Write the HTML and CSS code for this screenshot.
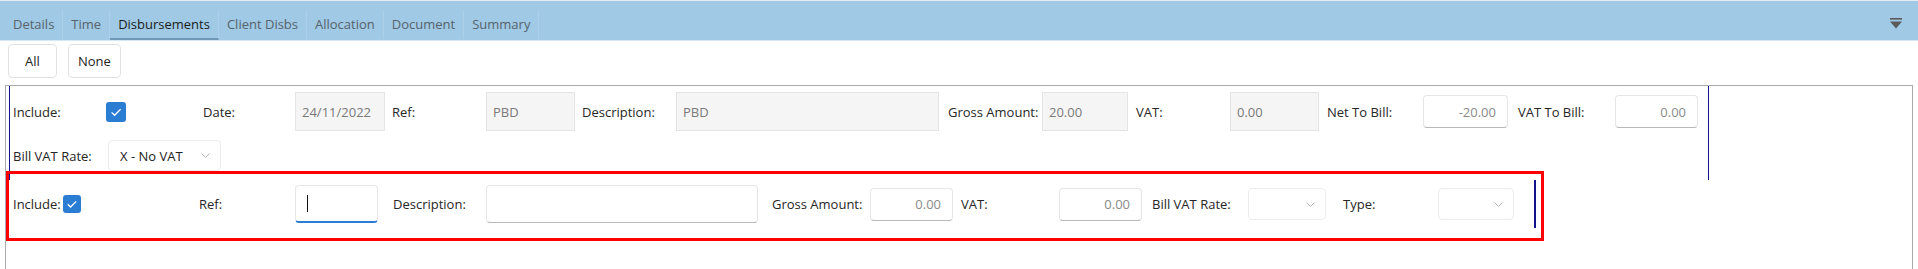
FILE: index.html
```html
<!DOCTYPE html>
<html lang="en">
<head>
    <meta charset="UTF-8">
    <meta name="viewport" content="width=device-width, initial-scale=1.0">
    <title>Disbursements</title>
    <link rel="stylesheet" href="styles.css">
</head>
<body>
    <!-- Tabs -->
    <div class="tabbar">
        <span class="tab">Details</span>
        <span class="tab">Time</span>
        <span class="tab active">Disbursements</span>
        <span class="tab">Client Disbs</span>
        <span class="tab">Allocation</span>
        <span class="tab">Document</span>
        <span class="tab">Summary</span>
        <svg class="menu-toggle" width="12" height="11" viewBox="0 0 12 11">
            <rect x="0" y="0" width="12" height="1.6" fill="#5a5a5a"/>
            <polygon points="0,3.6 12,3.6 6,10.6" fill="#5a5a5a"/>
        </svg>
    </div>

    <div class="actions">
        <button class="btn">All</button>
        <button class="btn">None</button>
    </div>

    <div class="panel">
        <!-- Existing disbursement -->
        <div class="item">
            <div class="row">
                <span class="lbl l-93">Include:</span>
                <span class="cell f-include">
                    <svg class="check" width="20" height="20" viewBox="0 0 20 20">
                        <rect width="20" height="20" rx="3" fill="#2b7cd3"/>
                        <path d="M5.6 10.4 L8.6 13.3 L14.6 7.2" fill="none" stroke="#fff" stroke-width="1.3"/>
                    </svg>
                </span>
                <span class="lbl l-92">Date:</span>
                <input class="inp dis f-date" value="24/11/2022" disabled>
                <span class="lbl">Ref:</span>
                <input class="inp dis f-ref" value="PBD" disabled>
                <span class="lbl">Description:</span>
                <input class="inp dis f-desc" value="PBD" disabled>
                <span class="lbl">Gross Amount:</span>
                <input class="inp dis f-gross" value="20.00" disabled>
                <span class="lbl">VAT:</span>
                <input class="inp dis f-vat" value="0.00" disabled>
                <span class="lbl l-96">Net To Bill:</span>
                <input class="inp f-net" value="-20.00">
                <span class="lbl l-97">VAT To Bill:</span>
                <input class="inp f-vatbill" value="0.00">
            </div>
            <div class="row">
                <span class="lbl l-95">Bill VAT Rate:</span>
                <div class="sel f-rate">
                    <span>X - No VAT</span>
                    <svg width="9" height="5" viewBox="0 0 9 5"><path d="M0.5 0.5 L4.5 4.5 L8.5 0.5" fill="none" stroke="#b5b5b5"/></svg>
                </div>
            </div>
        </div>

        <!-- New disbursement -->
        <div class="newrow">
            <div class="row row-new">
                <span class="cell f-include2">
                    <span>Include:</span>
                    <svg class="check small" width="18" height="18" viewBox="0 0 18 18">
                        <rect width="18" height="18" rx="3" fill="#2b7cd3"/>
                        <path d="M4.8 9.3 L7.6 12 L13.2 6.4" fill="none" stroke="#fff" stroke-width="1.3"/>
                    </svg>
                </span>
                <span class="lbl l-96">Ref:</span>
                <div class="inp txt focus f-ref2"><span class="caret"></span></div>
                <span class="lbl l-93">Description:</span>
                <input class="inp txt f-desc2" value="">
                <span class="lbl l-98">Gross Amount:</span>
                <input class="inp f-gross2" value="0.00">
                <span class="lbl l-98">VAT:</span>
                <input class="inp f-vat2" value="0.00">
                <span class="lbl l-96">Bill VAT Rate:</span>
                <div class="sel f-rate2">
                    <span></span>
                    <svg width="9" height="5" viewBox="0 0 9 5"><path d="M0.5 0.5 L4.5 4.5 L8.5 0.5" fill="none" stroke="#b5b5b5"/></svg>
                </div>
                <span class="lbl l-95">Type:</span>
                <div class="sel f-type">
                    <span></span>
                    <svg width="9" height="5" viewBox="0 0 9 5"><path d="M0.5 0.5 L4.5 4.5 L8.5 0.5" fill="none" stroke="#b5b5b5"/></svg>
                </div>
            </div>
        </div>

        <!-- highlight around the new row -->
        <div class="highlight"></div>
    </div>
</body>
</html>
```

FILE: styles.css
```css
body {
    margin: 0;
    font-family: "Open Sans", "Noto Sans", Arial, sans-serif;
    font-size: 13px;
    color: #262626;
    background-color: #fff;
    overflow: hidden;
}

/* Tabs */
.tabbar {
    display: flex;
    align-items: flex-start;
    height: 39px;
    padding-left: 5px;
    background-color: #9fc9e4;
    border-top: 1px solid #e4eef5;
    border-bottom: 1px solid #d6e7f2;
}
.tab {
    margin-top: 9px;
    height: 28px;
    line-height: 28px;
    padding: 0 8px;
    color: #56636d;
    border-bottom: 2px solid transparent;
    border-right: 1px solid rgba(255, 255, 255, 0.14);
}
.tab.active {
    color: #1c1c1c;
    border-bottom-color: #6d98b7;
}
.menu-toggle {
    margin-left: auto;
    margin-right: 16px;
    margin-top: 17px;
}

/* Buttons */
.actions {
    display: flex;
    gap: 11px;
    padding: 3px 0 0 8px;
}
.btn {
    height: 34px;
    min-width: 49px;
    padding: 0 9px;
    font: inherit;
    color: #222;
    background-color: #fff;
    border: 1px solid #e2e2e2;
    border-radius: 4px;
}

/* Panel */
.panel {
    position: relative;
    height: calc(100vh - 86px);
    margin: 7px 5px 0;
    border: 1px solid #ababab;
    border-bottom: none;
}
.item {
    box-sizing: border-box;
    width: 1700px;
    margin-left: 3px;
    padding: 6px 0 5px 3px;
    border-left: 1px solid #12128a;
    border-right: 1px solid #12128a;
}
.newrow {
    box-sizing: border-box;
    width: 1527px;
    margin-left: 3px;
    padding: 5px 0 5px 4px;
    border-right: 2px solid #12128a;
}
.row {
    display: flex;
    align-items: center;
    height: 39px;
}
.row + .row {
    margin-top: 5px;
}
.row-new {
    height: 38px;
}

.lbl {
    flex: none;
    width: 94px;
    white-space: nowrap;
}
.l-92 { width: 92px; }
.l-93 { width: 93px; }
.l-95 { width: 95px; }
.l-96 { width: 96px; }
.l-97 { width: 97px; }
.l-98 { width: 98px; }

.cell {
    flex: none;
    display: flex;
    align-items: center;
}
.check {
    display: block;
}
.check.small {
    margin-left: 2px;
}
.f-include { width: 97px; }
.f-include2 { width: 186px; }

/* Inputs */
.inp {
    flex: none;
    box-sizing: border-box;
    height: 33px;
    padding: 0 11px;
    font: inherit;
    color: #8a8a8a;
    text-align: right;
    background-color: #fff;
    border: 1px solid #e6e6e6;
    border-bottom-color: #b8b8b8;
    border-radius: 4px;
    outline: none;
}
.inp.dis {
    height: 39px;
    padding: 0 6px;
    color: #7a7a7a;
    text-align: left;
    background-color: #f5f5f5;
    border-color: #e4e4e4;
    border-radius: 0;
}
.inp.txt {
    height: 38px;
    text-align: left;
}
.inp.focus {
    display: flex;
    align-items: center;
    border-bottom: 2px solid #2b7cd3;
}
.caret {
    width: 1px;
    height: 17px;
    background-color: #111;
}

.f-date { width: 90px; margin-right: 7px; }
.f-ref { width: 89px; margin-right: 7px; }
.f-desc { width: 263px; margin-right: 9px; }
.f-gross { width: 86px; margin-right: 8px; }
.f-vat { width: 89px; margin-right: 8px; }
.f-net { width: 85px; margin-right: 10px; }
.f-vatbill { width: 83px; }

.f-ref2 { width: 83px; margin-right: 15px; }
.f-desc2 { width: 272px; margin-right: 14px; }
.f-gross2 { width: 83px; margin-right: 8px; }
.f-vat2 { width: 83px; margin-right: 10px; }

/* Selects */
.sel {
    flex: none;
    box-sizing: border-box;
    display: flex;
    align-items: center;
    justify-content: space-between;
    height: 31px;
    padding: 0 10px 0 11px;
    color: #222;
    background-color: #fff;
    border: 1px solid #ececec;
    border-radius: 4px;
}
.f-rate { width: 113px; }
.f-rate2 { width: 78px; margin-right: 17px; height: 32px; }
.f-type { width: 76px; height: 32px; }

/* Red box over the new row */
.highlight {
    position: absolute;
    left: 0;
    top: 85px;
    width: 1538px;
    height: 70px;
    box-sizing: border-box;
    border: 3px solid #ff0000;
    pointer-events: none;
}
```
